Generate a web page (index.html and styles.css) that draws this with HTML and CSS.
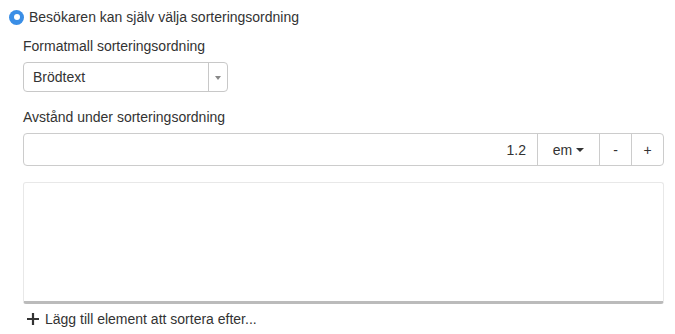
FILE: index.html
```html
<!DOCTYPE html>
<html lang="sv">
<head>
    <meta charset="UTF-8">
    <title>Sortering</title>
    <link rel="stylesheet" href="styles.css">
</head>
<body>

    <label class="radio-row">
        <span class="radio-dot"></span>
        Besökaren kan själv välja sorteringsordning
    </label>

    <div class="settings">
        <div class="field">
            <div class="field-label">Formatmall sorteringsordning</div>
            <div class="select">
                <span class="select-value">Brödtext</span>
                <span class="select-arrow"></span>
            </div>
        </div>

        <div class="field">
            <div class="field-label">Avstånd under sorteringsordning</div>
            <div class="input-group">
                <input class="num-input" type="text" value="1.2">
                <span class="addon addon-unit">em <span class="caret"></span></span>
                <span class="addon addon-btn">-</span>
                <span class="addon addon-btn">+</span>
            </div>
        </div>

        <div class="sort-list"></div>

        <div class="add-link">
            <svg class="plus" width="12" height="12" viewBox="0 0 12 12">
                <path d="M6 0v12M0 6h12" stroke="#333" stroke-width="2.2"/>
            </svg>
            Lägg till element att sortera efter...
        </div>
    </div>

</body>
</html>
```

FILE: styles.css
```css
body {
    margin: 0;
    font-family: "Liberation Sans", Arial, sans-serif;
    font-size: 14px;
    color: #333;
    background: #fff;
}

.radio-row {
    display: flex;
    align-items: center;
    gap: 5px;
    padding: 9px 0 0 9px;
    height: 16px;
}

.radio-dot {
    width: 15px;
    height: 15px;
    border-radius: 50%;
    background: #3a8ee6;
    position: relative;
}

.radio-dot:after {
    content: '';
    position: absolute;
    left: 4.5px;
    top: 4.5px;
    width: 6px;
    height: 6px;
    border-radius: 50%;
    background: #fff;
}

.settings {
    padding: 13px 11px 0 23px;
}

.field-label {
    line-height: 16px;
    margin-bottom: 8px;
}

.field {
    margin-bottom: 17px;
}

.select {
    width: 205px;
    height: 30px;
    box-sizing: border-box;
    border: 1px solid #c8c8c8;
    border-radius: 4px;
    display: flex;
    align-items: center;
}

.select-value {
    flex: 1;
    padding-left: 9px;
}

.select-arrow {
    width: 18px;
    height: 100%;
    border-left: 1px solid #c8c8c8;
    position: relative;
}

.select-arrow:after {
    content: '';
    position: absolute;
    left: 6px;
    top: 13px;
    border-left: 3.5px solid transparent;
    border-right: 3.5px solid transparent;
    border-top: 4px solid #888;
}

.input-group {
    display: flex;
    height: 33px;
    box-sizing: border-box;
    border: 1px solid #ccc;
    border-radius: 4px;
}

.num-input {
    flex: 1;
    border: none;
    outline: none;
    text-align: right;
    font: inherit;
    color: #333;
    padding: 0 11px;
    background: transparent;
    min-width: 0;
}

.addon {
    display: flex;
    align-items: center;
    justify-content: center;
    border-left: 1px solid #ccc;
}

.addon-unit {
    width: 61px;
    gap: 4px;
}

.addon-btn {
    width: 31px;
}

.caret {
    border-left: 4px solid transparent;
    border-right: 4px solid transparent;
    border-top: 4px solid #333;
}

.sort-list {
    height: 118px;
    border: 1px solid #e8e8e8;
    border-bottom: 3px solid #bbb;
    border-radius: 3px;
    margin-top: -1px;
}

.add-link {
    display: flex;
    align-items: center;
    gap: 6px;
    padding: 7px 0 0 4px;
}
```
